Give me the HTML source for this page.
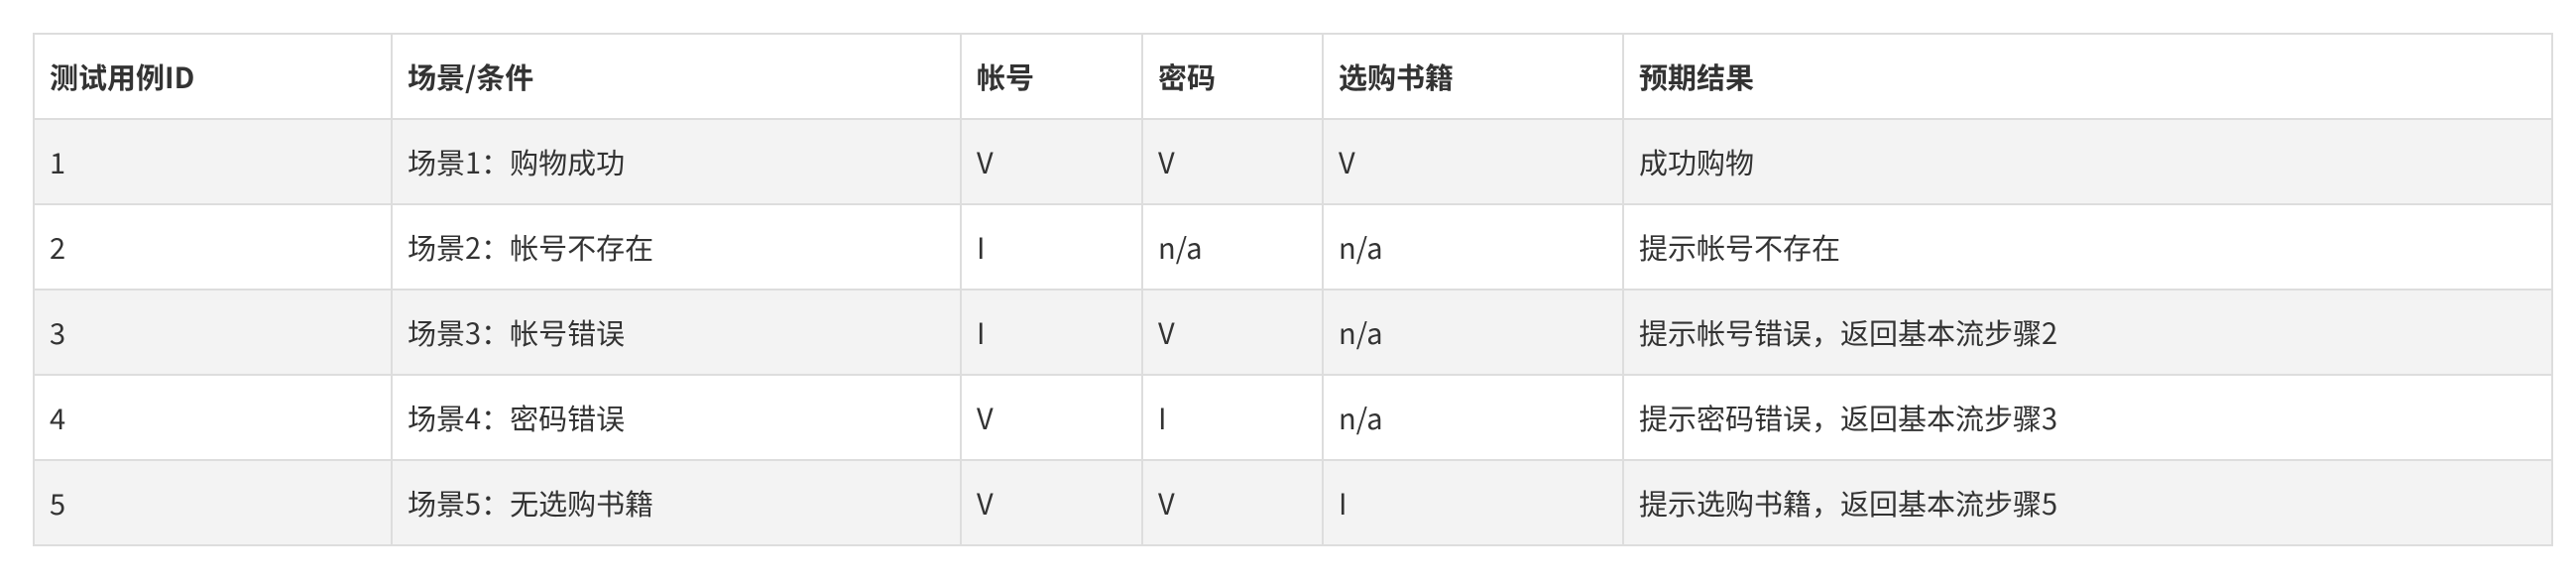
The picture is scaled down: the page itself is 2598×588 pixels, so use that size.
<!DOCTYPE html>
<html><head><meta charset="utf-8"><style>
html,body{margin:0;padding:0;background:#fff;width:2598px;height:588px;overflow:hidden}
table{position:absolute;left:33px;top:33px;border-collapse:collapse;table-layout:fixed;width:2540px;
font-family:"Noto Sans CJK SC","Liberation Sans",sans-serif;font-size:29px;color:#333}
td,th{border:2px solid #ddd;height:84px;box-sizing:border-box;padding:0 0 0 15px;text-align:left;vertical-align:middle;white-space:nowrap;line-height:30px}
tr{height:86px}
th{font-weight:bold}
tbody tr:nth-child(odd){background:#f3f3f3}
</style></head><body>
<table>
<colgroup><col style="width:361px"><col style="width:574px"><col style="width:183px"><col style="width:182px"><col style="width:303px"><col style="width:937px"></colgroup>
<thead><tr><th>测试用例ID</th><th>场景/条件</th><th>帐号</th><th>密码</th><th>选购书籍</th><th>预期结果</th></tr></thead>
<tbody>
<tr><td>1</td><td>场景1：购物成功</td><td>V</td><td>V</td><td>V</td><td>成功购物</td></tr>
<tr><td>2</td><td>场景2：帐号不存在</td><td>I</td><td>n/a</td><td>n/a</td><td>提示帐号不存在</td></tr>
<tr><td>3</td><td>场景3：帐号错误</td><td>I</td><td>V</td><td>n/a</td><td>提示帐号错误，返回基本流步骤2</td></tr>
<tr><td>4</td><td>场景4：密码错误</td><td>V</td><td>I</td><td>n/a</td><td>提示密码错误，返回基本流步骤3</td></tr>
<tr><td>5</td><td>场景5：无选购书籍</td><td>V</td><td>V</td><td>I</td><td>提示选购书籍，返回基本流步骤5</td></tr>
</tbody></table>
</body></html>
